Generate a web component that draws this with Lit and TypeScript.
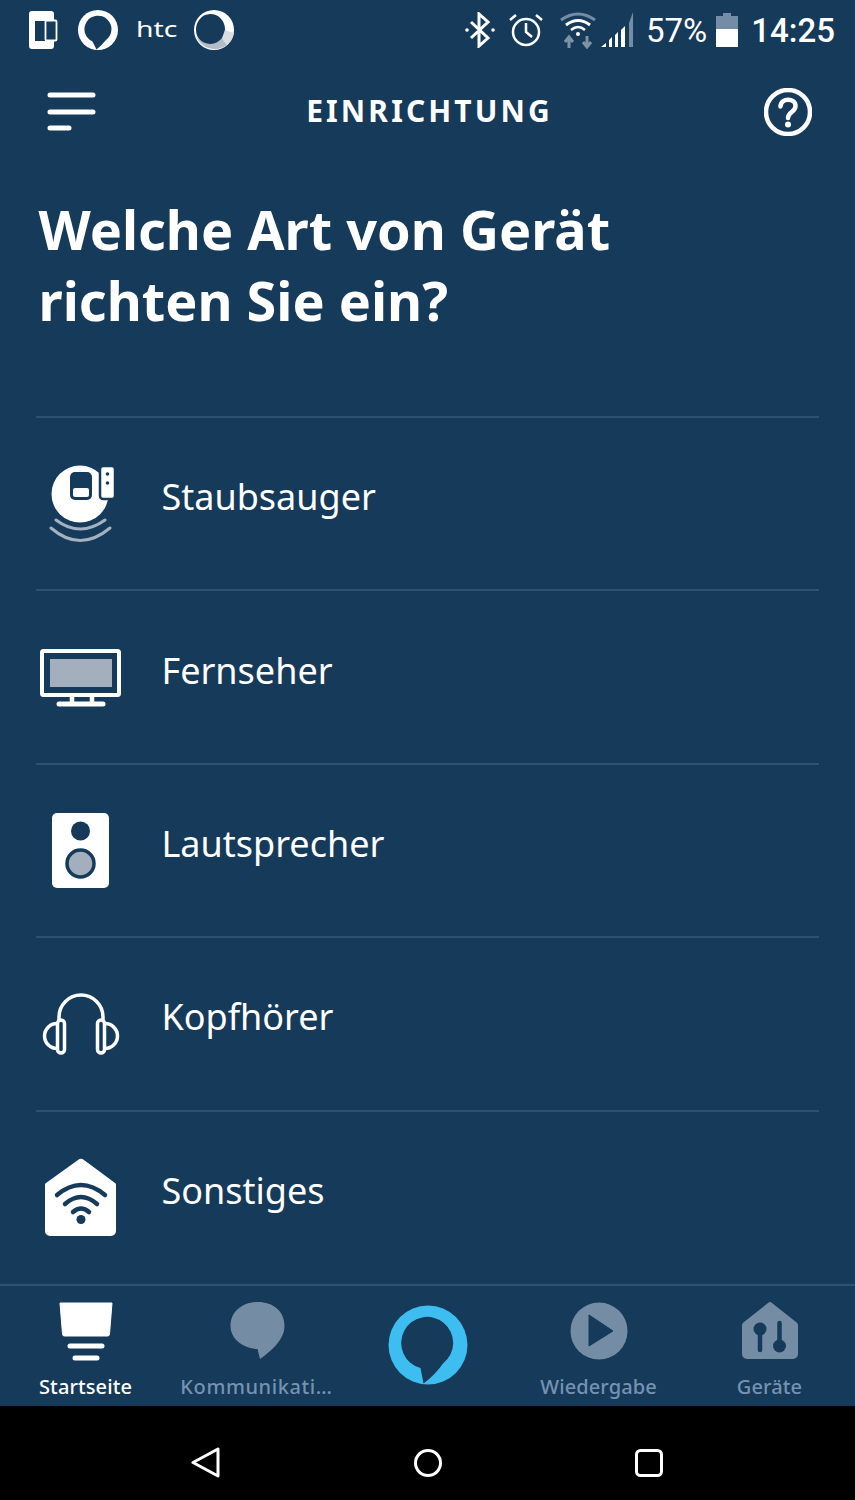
import { LitElement, html, css, svg } from "lit";
import { customElement } from "lit/decorators.js";

const BG = "#163a5a";
const icons: Record<string, unknown> = {
  vac: svg`<svg width="90" height="90" viewBox="0 0 90 90"><circle cx="44" cy="35" r="28.500" fill="#fff"/><rect x="34" y="13" width="22" height="28" rx="5" fill="${BG}"/><rect x="37" y="29" width="16" height="9" rx="2" fill="#fff"/><rect x="64" y="7" width="15" height="33" rx="3" fill="#fff" stroke="${BG}" stroke-width="2.500"/><circle cx="71.500" cy="15" r="1.800" fill="${BG}"/><circle cx="71.500" cy="24" r="1.800" fill="${BG}"/><path d="M20 61Q44 79 69 61M15 69Q44 94 74 69" fill="none" stroke="#a3b1c0" stroke-width="3" stroke-linecap="round"/></svg>`,
  tv: svg`<svg width="90" height="70" viewBox="0 0 90 70"><rect x="6" y="9" width="77" height="44" rx="1.500" fill="none" stroke="#fff" stroke-width="4"/><rect x="14" y="17" width="62" height="28" fill="#a3afbd"/><path d="M36 53v8M56 53v8" stroke="#fff" stroke-width="4.500"/><path d="M23 62h44" stroke="#fff" stroke-width="5" stroke-linecap="round"/></svg>`,
  spk: svg`<svg width="90" height="90" viewBox="0 0 90 90"><rect x="16" y="8" width="57" height="75" rx="5" fill="#fff"/><circle cx="44.500" cy="26" r="9.500" fill="${BG}"/><circle cx="44.500" cy="58.500" r="13.500" fill="#a3afbd" stroke="${BG}" stroke-width="3.500"/></svg>`,
  head: svg`<svg width="90" height="90" viewBox="0 0 90 90" fill="none" stroke="#fff" stroke-width="3.500" stroke-linejoin="round"><path d="M23 41V38a22 22 0 0 1 44 0v3"/><rect x="21.500" y="41" width="7" height="33" rx="3.500"/><rect x="61.500" y="41" width="7" height="33" rx="3.500"/><path d="M21 44.500a12.500 12.500 0 0 0 0 25M69 44.500a12.500 12.500 0 0 1 0 25"/></svg>`,
  home: svg`<svg width="90" height="90" viewBox="0 0 90 90"><path d="M42 8a4.500 4.500 0 0 1 6 0L79 31a2 2 0 0 1 1 2V79a5 5 0 0 1-5 5H14a5 5 0 0 1-5-5V33a2 2 0 0 1 1-2Z" fill="#fff"/><g fill="none" stroke="${BG}" stroke-width="4.500" stroke-linecap="round"><path d="M21 43Q45 23 69 43"/><path d="M29 52Q45 38 61 52"/><path d="M37 60Q45 53 53 60"/></g><circle cx="45" cy="67.500" r="4.500" fill="${BG}"/></svg>`,
};

const rows = [
  ["Staubsauger", "vac"],
  ["Fernseher", "tv"],
  ["Lautsprecher", "spk"],
  ["Kopfhörer", "head"],
  ["Sonstiges", "home"],
];

const G = "#748ca4";

const nav = [
  ["Startseite", true, svg`<svg width="60" height="60" viewBox="0 0 60 60"><path d="M4 1h52l-2.500 31a2 2 0 0 1-2 2h-43a2 2 0 0 1-2-2Z" fill="#fff" stroke="#fff" stroke-linejoin="round"/><path d="M14 44H46M19 56H41" stroke="#fff" stroke-width="5" stroke-linecap="round"/></svg>`],
  ["Kommunikati…", false, svg`<svg width="60" height="60" viewBox="0 0 60 60"><path d="M31 0C16 0 3.500 9 3.500 24c0 12 11 22 27 23l2.500 10c10-7 24.500-19 24.500-33C57.500 9 46 0 31 0Z" fill="${G}"/></svg>`],
  null,
  ["Wiedergabe", false, svg`<svg width="60" height="60" viewBox="0 0 60 60"><circle cx="30" cy="29" r="28.500" fill="${G}"/><path d="M20 13L44 29L20 44Z" fill="${BG}" stroke="${BG}" stroke-width="1"/></svg>`],
  ["Geräte", false, svg`<svg width="60" height="60" viewBox="0 0 60 60"><path d="M28 1a3 3 0 0 1 4 0L56 20a4 4 0 0 1 2 3V52a5 5 0 0 1-5 5H7a5 5 0 0 1-5-5V23a4 4 0 0 1 2-3Z" fill="${G}"/><circle cx="20" cy="27" r="6.500" fill="${BG}"/><path d="M20 30V48" stroke="${BG}" stroke-width="4.500" stroke-linecap="round"/><circle cx="39.500" cy="44" r="6.500" fill="${BG}"/><path d="M39.500 21V42" stroke="${BG}" stroke-width="4.500" stroke-linecap="round"/></svg>`],
] as const;

@customElement("app-root")
export class AppRoot extends LitElement {
  static styles = css`
    :host { display: block; width: 855px; height: 1500px; background: #163a5a; color: #fff; font-family: "Noto Sans", "Open Sans", sans-serif; overflow: hidden; }
    .page { display: flex; flex-direction: column; height: 1500px; }
    .status { height: 60px; display: flex; align-items: center; padding: 0 20px 0 28px; font-family: Roboto, sans-serif; font-size: 33px; }
    .status svg { display: block; flex: none; }
    .left { display: flex; align-items: center; gap: 20px; }
    .ring { margin-left: -1px; }
    .htc { font-family: "Noto Sans", sans-serif; font-weight: 400; font-size: 21px; width: 42px; margin: -3px -4px 0 -3px; transform: scaleX(1.350); transform-origin: left center; }
    .swirl { margin-left: -1px; }
    .right { margin-left: auto; display: flex; align-items: center; }
    .alarm { margin-left: 13px; }
    .wifi { margin-left: 16px; }
    .signal { margin-left: 4px; }
    .pct { margin-left: 10px; margin-right: 9px; }
    .time { margin-left: 13px; font-weight: 500; }
    .head { height: 104px; display: grid; grid-template-columns: 1fr auto 1fr; align-items: center; padding: 0 43px 6px 47px; }
    .head .t { font-size: 30px; font-weight: 700; letter-spacing: 3.100px; padding-bottom: 4px; }
    .head .q { justify-self: end; display: block; }
    h1 { margin: 24px 0 0 38.500px; font-size: 54px; line-height: 71px; font-weight: 700; height: 182px; }
    .list { margin: 40px 36px 0; border-top: 2px solid #2e5270; }
    .row { height: 171.400px; border-bottom: 2px solid #2e5270; display: flex; align-items: center; }
    .list .row:last-child { border-bottom: none; }
    .ic { width: 90px; height: 90px; display: flex; align-items: center; justify-content: center; flex: none; }
    .lb { font-size: 36px; margin-left: 35.500px; padding-bottom: 14px; }
    .wide { border-top: 2px solid #2e5270; margin-top: auto; height: 122px; display: grid; grid-template-columns: repeat(5, 171px); flex: none; box-sizing: border-box; }
    .nv { display: flex; flex-direction: column; align-items: center; padding-top: 16px; font-size: 20px; font-weight: 500; color: #7593b0; }
    .nv.on { color: #fff; }
    .nv svg { display: block; }
    .nv span { margin-top: 11px; line-height: 27px; white-space: nowrap; letter-spacing: 0.100px; }
    .nv.cut span { letter-spacing: 0.600px; }
    .al { display: flex; align-items: center; justify-content: center; padding-bottom: 2px; }
    .sys { flex: none; height: 94px; box-sizing: border-box; padding-top: 20px; background: #000; display: flex; justify-content: center; align-items: center; }
    .sys div { width: 221.500px; display: flex; justify-content: center; }
  `;

  render() {
    return html`<div class="page">
      <div class="status">
        <div class="left">
          <svg width="30" height="38" viewBox="0 0 30 38"><rect x="1" y="0" width="25" height="38" rx="3" fill="#fff"/><rect x="7" y="10" width="11" height="20" fill="#163a5a"/><rect x="17.500" y="9.500" width="11" height="20" rx="1" fill="#163a5a" stroke="#fff" stroke-width="1.800"/></svg>
          <svg class="ring" width="42" height="42" viewBox="0 0 42 42"><circle cx="21" cy="21" r="20" fill="#fff"/><path d="M15.500 32.500A13.500 13.500 0 1 1 29 31Q25 36 19.500 40.500Z" fill="#163a5a"/></svg>
          <span class="htc">htc</span>
          <svg class="swirl" width="42" height="42" viewBox="0 0 42 42"><path fill-rule="evenodd" d="M41 21A20 20 0 1 1 1 21A20 20 0 1 1 41 21ZM32 20A14.500 15.500 0 1 0 3 21A14.500 15.500 0 1 0 32 20Z" fill="#fff"/><path d="M3 27A20 20 0 0 0 34 36L29 29A15 15 0 0 1 6 30Z" fill="#b3bdc6"/><path d="M41 24L32 21L29 29L34 36Q40 31 41 24Z" fill="#d8dde2"/></svg>
        </div>
        <div class="right">
          <svg width="30" height="36" viewBox="0 0 30 36" fill="none" stroke="#fff" stroke-width="3"><path d="M6 10L23 26L14 34V2L23 10L6 26"/><circle cx="2" cy="18" r="1.800" fill="#fff" stroke="none"/><circle cx="28" cy="18" r="1.800" fill="#fff" stroke="none"/></svg>
          <svg class="alarm" width="36" height="36" viewBox="0 0 36 36" fill="none" stroke="#fff" stroke-width="2.500"><circle cx="18" cy="20" r="13"/><path d="M18 11V20L24 25M2 8L8 3M34 8L28 3"/></svg>
          <svg class="wifi" width="36" height="38" viewBox="0 0 36 38" fill="none"><path d="M1 9Q18 -3 35 9" stroke="#748ca4" stroke-width="3"/><path d="M6 14Q18 5 30 14" stroke="#fff" stroke-width="3"/><path d="M11 19Q18 13 25 19" stroke="#fff" stroke-width="2.500"/><circle cx="18" cy="23" r="2" fill="#fff"/><path d="M9 37V28M5 31L9 26L13 31" stroke="#7f93a6" stroke-width="3"/><path d="M27 25V34M23 31L27 36L31 31" stroke="#7f93a6" stroke-width="3"/></svg>
          <svg class="signal" width="36" height="38" viewBox="0 0 36 38"><path d="M1 36L6 32V36ZM9 29L12 26V36H9ZM15 24L18 21V36H15ZM21 19L25 15V36H21Z" fill="#fff"/><path d="M29 12L33 1V36H29Z" fill="#748ca4"/></svg>
          <span class="pct">57%</span>
          <svg width="22" height="34" viewBox="0 0 22 34"><path d="M7 0h8v3h7v13H0V3h7Z" fill="#748ca4"/><rect y="16" width="22" height="18" fill="#fff"/></svg>
          <span class="time">14:25</span>
        </div>
      </div>
      <div class="head">
        <svg width="50" height="40" viewBox="0 0 50 40" fill="none" stroke="#fff" stroke-width="5" stroke-linecap="round"><path d="M3 3H46M3 20H46M3 36H22"/></svg>
        <div class="t">EINRICHTUNG</div>
        <svg class="q" width="48" height="48" viewBox="0 0 48 48" fill="none" stroke="#fff"><circle cx="24" cy="24" r="22" stroke-width="4.500"/><path d="M16.500 18.500C17 9 31.500 10 31.500 18C31.500 24 24 24 24 30" stroke-width="4.500" stroke-linecap="round"/><circle cx="24" cy="36.500" r="3" fill="#fff" stroke="none"/></svg>
      </div>
      <h1>Welche Art von Gerät<br />richten Sie ein?</h1>
      <div class="list">
        ${rows.map(([l, i]) => html`<div class="row"><div class="ic">${icons[i]}</div><div class="lb">${l}</div></div>`)}
      </div>
      <div class="wide">
        ${nav.map((n) =>
          n
            ? html`<div class="nv ${n[1] ? "on" : ""} ${n[0].endsWith("…") ? "cut" : ""}">${n[2]}<span>${n[0]}</span></div>`
            : html`<div class="al"><svg width="80" height="80" viewBox="0 0 80 80"><circle cx="40" cy="40" r="39.500" fill="#3dbdf0"/><path d="M32.500 63A26 26 0 1 1 55 58.500Q47 70 35.500 78.500Z" fill="#163a5a"/></svg></div>`
        )}
      </div>
      <div class="sys">
        <div><svg width="30" height="34" viewBox="0 0 30 34" fill="none" stroke="#fff" stroke-width="3" stroke-linejoin="round"><path d="M27 3V30L2 16.500Z"/></svg></div>
        <div><svg width="30" height="30" viewBox="0 0 30 30" fill="none" stroke="#fff" stroke-width="3"><circle cx="15" cy="15" r="12.500"/></svg></div>
        <div><svg width="30" height="30" viewBox="0 0 30 30" fill="none" stroke="#fff" stroke-width="3"><rect x="2.500" y="2.500" width="25" height="25" rx="4"/></svg></div>
      </div>
    </div>`;
  }
}
